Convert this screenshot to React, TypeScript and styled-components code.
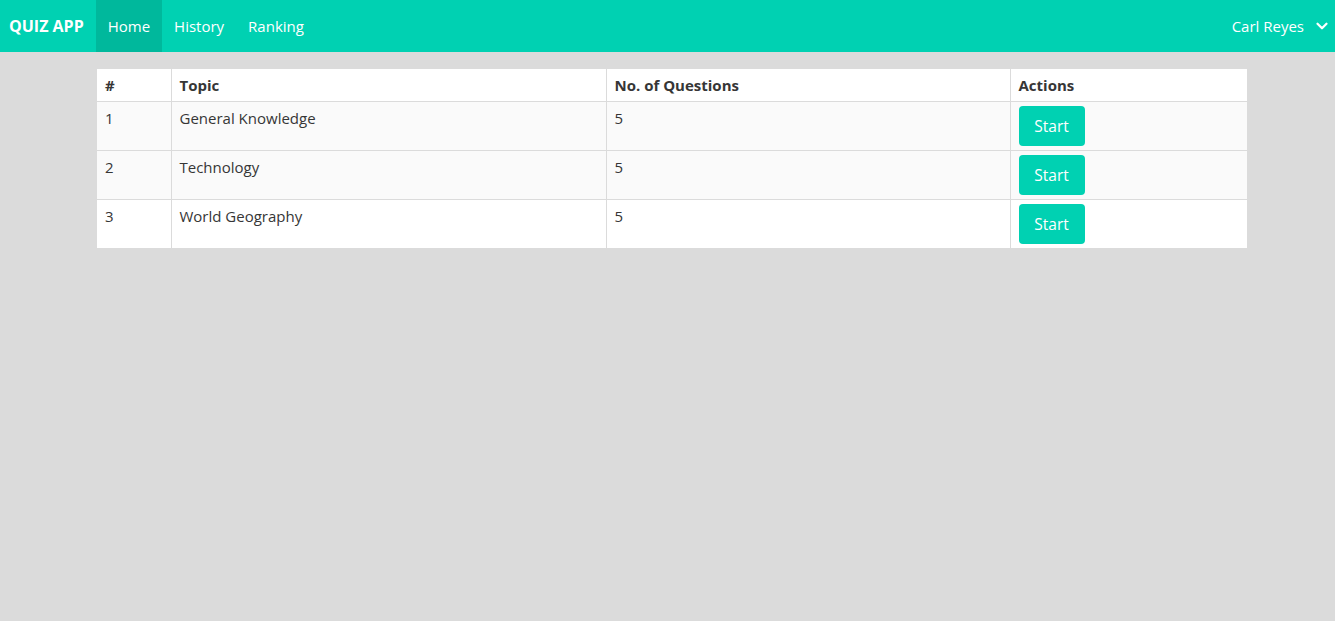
import { FunctionComponent } from 'react';
import { createGlobalStyle, styled } from 'styled-components';
import { ChevronDown } from 'lucide-react';

const GlobalStyle = createGlobalStyle`
  html, body {
    margin: 0;
    padding: 0;
    background: #dbdbdb;
    font-family: "Open Sans", "Noto Sans", sans-serif;
    font-size: 15px;
    color: #363636;
  }
`;

type Quiz = { id: number; topic: string; questions: number };

const quizzes: Quiz[] = [
  { id: 1, topic: 'General Knowledge', questions: 5 },
  { id: 2, topic: 'Technology', questions: 5 },
  { id: 3, topic: 'World Geography', questions: 5 },
];

const App: FunctionComponent = () => (
  <>
    <GlobalStyle />
    <Navbar>
      <Brand>QUIZ APP</Brand>
      <NavItem $active>Home</NavItem>
      <NavItem>History</NavItem>
      <NavItem>Ranking</NavItem>
      <NavEnd>
        <UserMenu>
          Carl Reyes
          <ChevronDown size={18} strokeWidth={3} />
        </UserMenu>
      </NavEnd>
    </Navbar>
    <Main>
      <Table>
        <colgroup>
          <col style={{ width: 74 }} />
          <col style={{ width: 435 }} />
          <col style={{ width: 404 }} />
          <col />
        </colgroup>
        <thead>
          <tr>
            <Th>#</Th>
            <Th>Topic</Th>
            <Th>No. of Questions</Th>
            <Th>Actions</Th>
          </tr>
        </thead>
        <tbody>
          {quizzes.map((q, i) => (
            <Row key={q.id} $striped={i < 2}>
              <Td>{q.id}</Td>
              <Td>{q.topic}</Td>
              <Td>{q.questions}</Td>
              <ActionTd>
                <StartButton>Start</StartButton>
              </ActionTd>
            </Row>
          ))}
        </tbody>
      </Table>
    </Main>
  </>
);

const Navbar = styled.nav`
  display: flex;
  align-items: stretch;
  height: 52px;
  background: #00d1b2;
  color: #fff;
`;
const Brand = styled.div`
  display: flex;
  align-items: center;
  padding: 0 12px 0 9px;
  font-weight: 700;
  font-size: 16px;
`;
const NavItem = styled.a<{ $active?: boolean }>`
  display: flex;
  align-items: center;
  padding: 0 12px;
  background: ${(p) => (p.$active ? '#00b89c' : 'transparent')};
  cursor: pointer;
`;
const NavEnd = styled.div`
  margin-left: auto;
  display: flex;
  align-items: stretch;
`;
const UserMenu = styled.div`
  display: flex;
  align-items: center;
  gap: 9px;
  padding: 0 4px 0 12px;
`;
const Main = styled.main`
  padding: 17px 88px 0 97px;
`;
const Table = styled.table`
  width: 1150px;
  border-collapse: collapse;
  table-layout: fixed;
  background: #fff;
`;
const Th = styled.th`
  box-sizing: border-box;
  height: 32px;
  padding: 0 8px;
  text-align: left;
  font-weight: 700;
  color: #363636;
  border-bottom: 1px solid #dbdbdb;
  border-left: 1px solid #dbdbdb;
  &:first-child {
    border-left: none;
  }
`;
const Row = styled.tr<{ $striped?: boolean }>`
  background: ${(p) => (p.$striped ? '#fafafa' : '#fff')};
  border-bottom: 1px solid #dbdbdb;
  &:last-child {
    border-bottom: none;
  }
`;
const Td = styled.td`
  box-sizing: border-box;
  height: 49px;
  padding: 5px 8px 0;
  vertical-align: top;
  line-height: 22px;
  border-left: 1px solid #dbdbdb;
  &:first-child {
    border-left: none;
  }
`;
const ActionTd = styled(Td)`
  padding-top: 4px;
`;
const StartButton = styled.button`
  width: 66px;
  height: 40px;
  border: none;
  border-radius: 4px;
  background: #00d1b2;
  color: #fff;
  font-family: inherit;
  font-size: 15.5px;
  cursor: pointer;
`;

export default App;
